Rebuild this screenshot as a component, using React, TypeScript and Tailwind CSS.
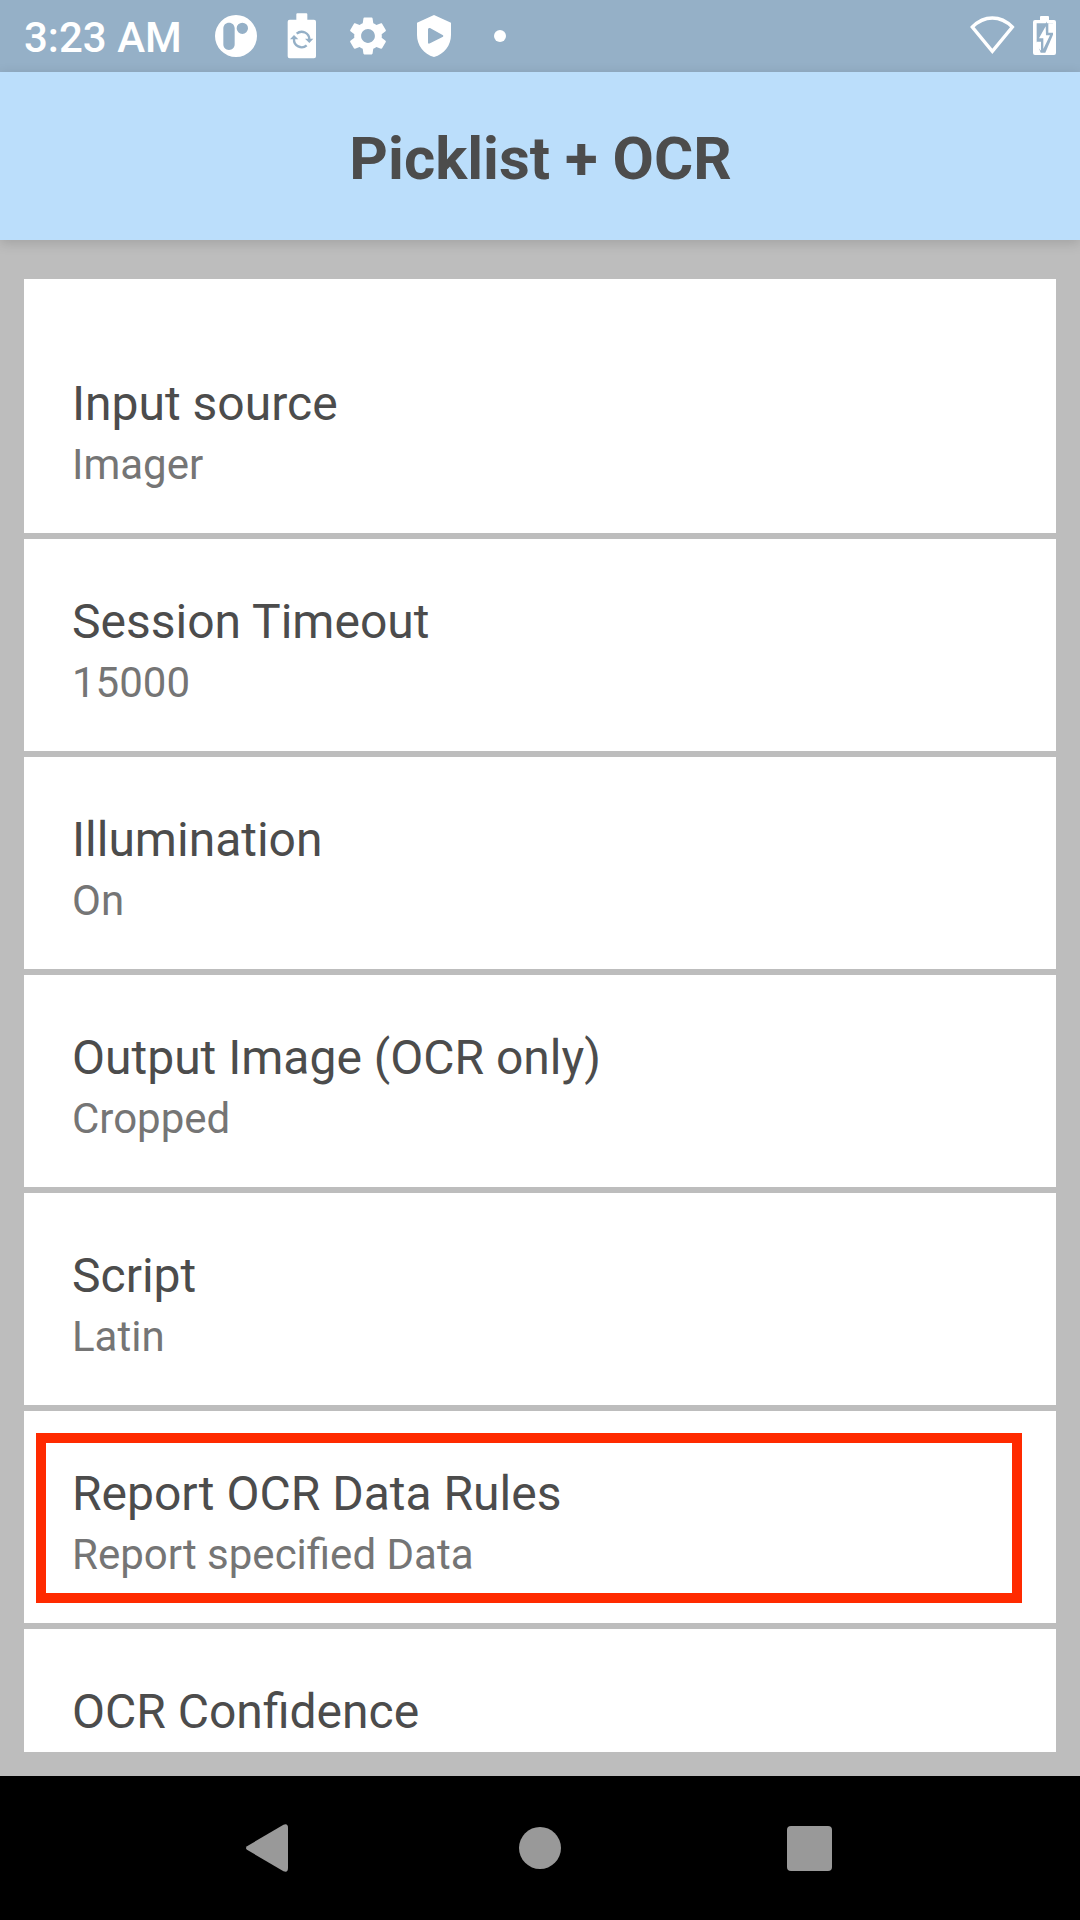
import React from "react";

type Setting = { title: string; value?: string; highlighted?: boolean };

const settings: Setting[] = [
  { title: "Input source", value: "Imager" },
  { title: "Session Timeout", value: "15000" },
  { title: "Illumination", value: "On" },
  { title: "Output Image (OCR only)", value: "Cropped" },
  { title: "Script", value: "Latin" },
  { title: "Report OCR Data Rules", value: "Report specified Data", highlighted: true },
  { title: "OCR Confidence" },
];

function StatusBar() {
  return (
    <div className="flex h-[72px] shrink-0 items-center bg-[#95b0c7] pl-6 pr-6 text-white">
      <span className="w-[191px] whitespace-nowrap pt-[3px] text-[42px] font-medium leading-[50px]">3:23 AM</span>
      {/* App badge */}
      <svg className="h-[42px] w-[42px]" viewBox="0 0 126 126" fill="currentColor">
        <path
          fillRule="evenodd"
          d="M63 0a63 63 0 1 1 0 126a63 63 0 1 1 0-126ZM42 23c-10 0-17 7-17 17v48c0 10 7 17 17 17s17-7 17-17V40c0-10-7-17-17-17ZM82 23a17 17 0 1 0 0 34a17 17 0 1 0 0-34Z"
        />
      </svg>
      {/* Battery with sync arrows */}
      <svg className="ml-[30px] h-[46px] w-[30px]" viewBox="0 0 90 138">
        <path
          fill="currentColor"
          d="M28 4q0-3 3-3h27q3 0 3 3v16h20q6 0 6 6v104q0 6-6 6H8q-6 0-6-6V26q0-6 6-6h20Z"
        />
        <g fill="none" stroke="#95b0c7" strokeWidth="7">
          <path d="M29 62A23 23 0 0 1 67 80" />
          <path d="M59 97A23 23 0 0 1 21 78" />
        </g>
        <path fill="#95b0c7" d="M54 77h25l-12 13ZM9 79h25L21 66Z" />
      </svg>
      {/* Settings gear */}
      <svg className="ml-[28px] h-[46px] w-[46px]" viewBox="0 0 24 24" fill="currentColor">
        <path d="M19.14 12.94c.04-.3.06-.61.06-.94 0-.32-.02-.64-.07-.94l2.03-1.58c.18-.14.23-.41.12-.61l-1.92-3.32c-.12-.22-.37-.29-.59-.22l-2.39.96c-.5-.38-1.03-.7-1.62-.94l-.36-2.54c-.04-.24-.24-.41-.48-.41h-3.84c-.24 0-.43.17-.47.41l-.36 2.54c-.59.24-1.13.57-1.62.94l-2.39-.96c-.22-.08-.47 0-.59.22L2.74 8.87c-.12.21-.08.47.12.61l2.03 1.58c-.05.3-.09.63-.09.94s.02.64.07.94l-2.03 1.58c-.18.14-.23.41-.12.61l1.92 3.32c.12.22.37.29.59.22l2.39-.96c.5.38 1.03.7 1.62.94l.36 2.54c.05.24.24.41.48.41h3.84c.24 0 .44-.17.47-.41l.36-2.54c.59-.24 1.13-.56 1.62-.94l2.39.96c.22.08.47 0 .59-.22l1.92-3.32c.12-.22.07-.47-.12-.61l-2.01-1.58zM12 15.6c-1.98 0-3.6-1.62-3.6-3.6s1.62-3.6 3.6-3.6 3.6 1.62 3.6 3.6-1.62 3.6-3.6 3.6z" />
      </svg>
      {/* Play shield */}
      <svg className="ml-[26px] h-[42px] w-[34px]" viewBox="0 0 102 126" fill="currentColor">
        <path
          fillRule="evenodd"
          d="M51 0L102 23V60C102 90 82 118 51 126C20 118 0 90 0 60V23ZM33 43V83Q34 88 39 85L78 65Q80 63 78 61L39 39Q34 38 33 43Z"
        />
      </svg>
      <span className="ml-[43px] h-3 w-3 rounded-full bg-white" />
      {/* Wi-Fi outline */}
      <svg
        className="mb-[2px] ml-auto h-[38px] w-[45px]"
        viewBox="0 0 135 114"
        fill="none"
        stroke="currentColor"
        strokeWidth="10"
      >
        <path d="M7 33Q34 6 67 6T127 33L67 106Z" />
      </svg>
      {/* Charging battery */}
      <svg className="mb-[2px] ml-[18px] h-[39px] w-[23px]" viewBox="0 0 69 117">
        <path
          fill="currentColor"
          d="M21 3q0-3 3-3h21q3 0 3 3v9h15q6 0 6 6v93q0 6-6 6H6q-6 0-6-6V18q0-6 6-6h15Z"
        />
        <path fill="#95b0c7" d="M11 22H60V56L37 110H23L11 78Z" />
        <path fill="currentColor" d="M11 77H24V104L11 90ZM46 22H61V50H46Z" />
        <path fill="currentColor" stroke="#95b0c7" strokeWidth="8" paintOrder="stroke" d="M38 31L18 67H31V99L51 58H39Z" />
      </svg>
    </div>
  );
}

function SettingCard({ title, value, highlighted, first }: Setting & { first: boolean }) {
  return (
    <div className={`relative flex shrink-0 flex-col bg-white px-12 ${first ? "h-[254px] pt-[96px]" : "h-[212px] pt-[54px]"}`}>
      <div className="whitespace-nowrap text-[48px] leading-[57px] text-[#4c4c4c]">{title}</div>
      {value && <div className="mt-2 whitespace-nowrap text-[42px] leading-[49px] text-[#757575]">{value}</div>}
      {highlighted && (
        <div className="absolute left-3 top-[22px] h-[170px] w-[986px] border-[10px] border-[#ff2a00]" />
      )}
    </div>
  );
}

function NavBar() {
  return (
    <nav className="flex h-36 shrink-0 items-center justify-center bg-black text-[#999]">
      <div className="flex w-[270px] justify-center pr-[6px]">
        <svg className="h-[48px] w-[44px]" viewBox="0 0 44 48" fill="currentColor">
          <path d="M2 22.2L38.5.8Q43-1 43 4V44Q43 49 38.5 47.2L2 25.8Q0 24 2 22.2Z" />
        </svg>
      </div>
      <div className="flex w-[270px] justify-center">
        <span className="h-[42px] w-[42px] rounded-full bg-[#999]" />
      </div>
      <div className="flex w-[270px] justify-center pr-px">
        <span className="h-[45px] w-[45px] rounded-[4px] bg-[#999]" />
      </div>
    </nav>
  );
}

export default function App() {
  return (
    <div className="flex h-[1920px] w-[1080px] flex-col overflow-hidden bg-[#bdbdbd] font-['Roboto',sans-serif]">
      <StatusBar />
      <header className="z-10 flex h-[168px] shrink-0 items-center justify-center bg-[#bbdefb] pl-px pt-[6px] shadow-[0_3px_12px_rgba(0,0,0,0.15)]">
        <h1 className="text-[60px] font-bold leading-[70px] text-[#4c4c4c]">Picklist + OCR</h1>
      </header>
      <main className="mx-6 mb-6 mt-[39px] flex min-h-0 flex-1 flex-col gap-1.5 overflow-hidden">
        {settings.map((s, i) => (
          <SettingCard key={s.title} {...s} first={i === 0} />
        ))}
      </main>
      <NavBar />
    </div>
  );
}
